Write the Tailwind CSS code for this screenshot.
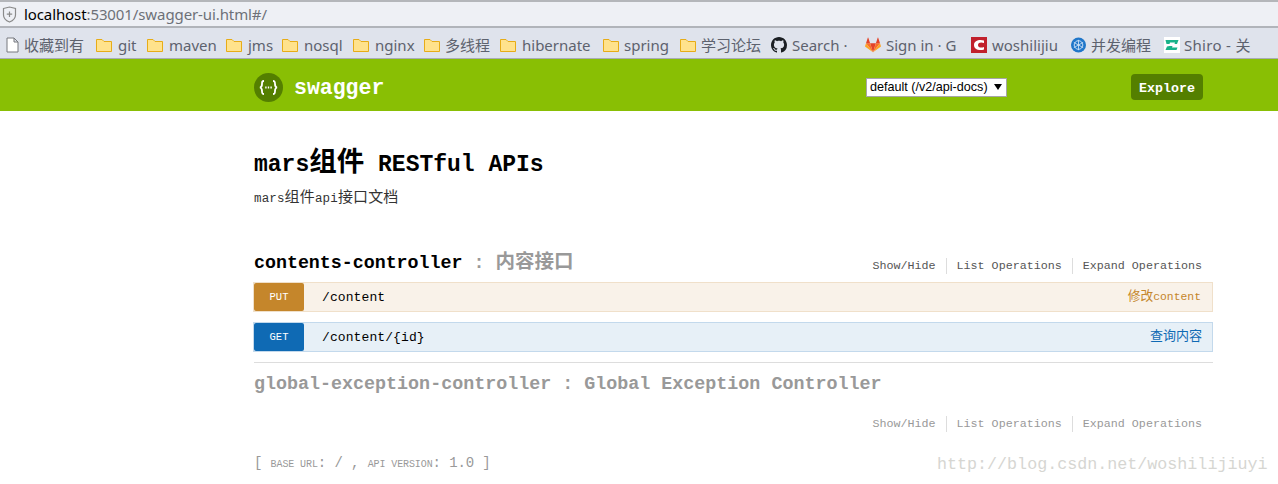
<!DOCTYPE html>
<html lang="en">
<head>
    <meta charset="UTF-8">
    <title>Swagger UI</title>
    <script src="https://cdn.jsdelivr.net/npm/@tailwindcss/browser@4"></script>
</head>
<body class="bg-white font-['Liberation_Mono','Noto_Sans_CJK_SC',monospace]">
<div class="relative h-[484px] overflow-hidden">

    <!-- browser chrome -->
    <div class="h-[59px] border-b border-[#a9adb5] font-['Noto_Sans','Noto_Sans_CJK_SC',sans-serif]">
        <div class="h-[28px] border-t-2 border-b-2 border-t-[#b4b6ba] border-b-[#b1b4ba] bg-[#eef0f5] flex items-center pl-[2px]">
            <svg class="w-[15px] h-[17px]" viewBox="0 0 15 17" fill="none" stroke="#8a8a8a" stroke-width="1.2">
                <path d="M1.5 2.5 L7.5 1 L13.5 2.5 V9 C13.5 12.5 10.5 14.8 7.5 16 C4.5 14.8 1.5 12.5 1.5 9 Z"/>
                <path d="M7.5 5.5 V11 M4.8 8.2 H10.2"/>
            </svg>
            <div class="ml-[7px] text-[15px] tracking-[-0.1px] text-[#6d7078]"><span class="text-black">localhost</span>:53001/swagger-ui.html#/</div>
        </div>
        <div class="h-[30px] bg-[#dfe3ec] flex items-center text-[15px] text-[#5d626e] pl-[6px] pt-[4px] whitespace-nowrap">
            <div class="w-[90px] flex items-center gap-[5px]">
                <svg class="w-[13px] h-[16px]" viewBox="0 0 13 16" fill="#fff" stroke="#77797f"><path d="M1 1 H8 L12 5 V15 H1 Z M8 1 V5 H12" /></svg>
                <span>收藏到有</span>
            </div>
            <div class="w-[51px] flex items-center gap-[6px]"><svg class="w-[16px] h-[14px]" viewBox="0 0 16 14" fill="#ffe28c" stroke="#e7ac17"><path d="M.5 13.5 V1.5 H6 L8 3.5 H15.5 V13.5 Z"/></svg><span>git</span></div>
            <div class="w-[79px] flex items-center gap-[6px]"><svg class="w-[16px] h-[14px]" viewBox="0 0 16 14" fill="#ffe28c" stroke="#e7ac17"><path d="M.5 13.5 V1.5 H6 L8 3.5 H15.5 V13.5 Z"/></svg><span>maven</span></div>
            <div class="w-[56px] flex items-center gap-[6px]"><svg class="w-[16px] h-[14px]" viewBox="0 0 16 14" fill="#ffe28c" stroke="#e7ac17"><path d="M.5 13.5 V1.5 H6 L8 3.5 H15.5 V13.5 Z"/></svg><span>jms</span></div>
            <div class="w-[71px] flex items-center gap-[6px]"><svg class="w-[16px] h-[14px]" viewBox="0 0 16 14" fill="#ffe28c" stroke="#e7ac17"><path d="M.5 13.5 V1.5 H6 L8 3.5 H15.5 V13.5 Z"/></svg><span>nosql</span></div>
            <div class="w-[71px] flex items-center gap-[6px]"><svg class="w-[16px] h-[14px]" viewBox="0 0 16 14" fill="#ffe28c" stroke="#e7ac17"><path d="M.5 13.5 V1.5 H6 L8 3.5 H15.5 V13.5 Z"/></svg><span>nginx</span></div>
            <div class="w-[76px] flex items-center gap-[5px]"><svg class="w-[16px] h-[14px]" viewBox="0 0 16 14" fill="#ffe28c" stroke="#e7ac17"><path d="M.5 13.5 V1.5 H6 L8 3.5 H15.5 V13.5 Z"/></svg><span>多线程</span></div>
            <div class="w-[103px] flex items-center gap-[6px]"><svg class="w-[16px] h-[14px]" viewBox="0 0 16 14" fill="#ffe28c" stroke="#e7ac17"><path d="M.5 13.5 V1.5 H6 L8 3.5 H15.5 V13.5 Z"/></svg><span>hibernate</span></div>
            <div class="w-[77px] flex items-center gap-[5px]"><svg class="w-[16px] h-[14px]" viewBox="0 0 16 14" fill="#ffe28c" stroke="#e7ac17"><path d="M.5 13.5 V1.5 H6 L8 3.5 H15.5 V13.5 Z"/></svg><span>spring</span></div>
            <div class="w-[91px] flex items-center gap-[5px]"><svg class="w-[16px] h-[14px]" viewBox="0 0 16 14" fill="#ffe28c" stroke="#e7ac17"><path d="M.5 13.5 V1.5 H6 L8 3.5 H15.5 V13.5 Z"/></svg><span>学习论坛</span></div>
            <div class="w-[94px] flex items-center gap-[5px]">
                <svg class="w-[16px] h-[16px]" viewBox="0 0 16 16" fill="#1b1f23"><path d="M8 0C3.58 0 0 3.58 0 8c0 3.54 2.29 6.53 5.47 7.59.4.07.55-.17.55-.38 0-.19-.01-.82-.01-1.49-2.01.37-2.53-.49-2.69-.94-.09-.23-.48-.94-.82-1.13-.28-.15-.68-.52-.01-.53.63-.01 1.08.58 1.23.82.72 1.21 1.87.87 2.33.66.07-.52.28-.87.51-1.07-1.78-.2-3.64-.89-3.64-3.95 0-.87.31-1.59.82-2.15-.08-.2-.36-1.02.08-2.12 0 0 .67-.21 2.2.82.64-.18 1.32-.27 2-.27s1.36.09 2 .27c1.53-1.04 2.2-.82 2.2-.82.44 1.1.16 1.92.08 2.12.51.56.82 1.27.82 2.15 0 3.07-1.87 3.75-3.65 3.95.29.25.54.73.54 1.48 0 1.07-.01 1.93-.01 2.2 0 .21.15.46.55.38A8.01 8.01 0 0016 8c0-4.42-3.58-8-8-8z"/></svg>
                <span>Search ·</span>
            </div>
            <div class="w-[106px] flex items-center gap-[5px]">
                <svg class="w-[16px] h-[16px]" viewBox="0 0 16 16">
                    <path fill="#e24329" d="M8 15.2 L5.1 6.2 H10.9 Z"/>
                    <path fill="#fc6d26" d="M8 15.2 L5.1 6.2 H1 Z M8 15.2 L10.9 6.2 H15 Z"/>
                    <path fill="#fca326" d="M1 6.2 L.1 9.1 C0 9.4.1 9.6.3 9.8 L8 15.2 Z M15 6.2 L15.9 9.1 C16 9.4 15.9 9.6 15.7 9.8 L8 15.2 Z"/>
                    <path fill="#e24329" d="M1 6.2 H5.1 L3.3 .7 C3.2 .4 2.9 .4 2.8 .7 Z M15 6.2 H10.9 L12.7 .7 C12.8 .4 13.1 .4 13.2 .7 Z"/>
                </svg>
                <span>Sign in · G</span>
            </div>
            <div class="w-[100px] flex items-center gap-[5px]">
                <svg class="w-[16px] h-[16px]" viewBox="0 0 16 16">
                    <rect width="16" height="16" fill="#c1202c"/>
                    <path d="M13 3.6 C9 2 3 3.2 3 8 C3 12.8 9 14 13 12.4 V10 C10.5 11 7 10.8 7 8 C7 5.2 10.5 5 13 6 Z" fill="#fff"/>
                </svg>
                <span>woshilijiu</span>
            </div>
            <div class="w-[93px] flex items-center gap-[5px]">
                <svg class="w-[15px] h-[16px]" viewBox="0 0 16 16" fill="none">
                    <circle cx="8" cy="8" r="8" fill="#1f76c9"/>
                    <circle cx="8" cy="8" r="4.6" stroke="#cfe3f7"/>
                    <path d="M8 2.5 V13.5 M3 5.2 L13 10.8 M13 5.2 L3 10.8" stroke="#cfe3f7" stroke-width=".9"/>
                </svg>
                <span>并发编程</span>
            </div>
            <div class="flex items-center gap-[4px]">
                <svg class="w-[16px] h-[16px]" viewBox="0 0 16 16">
                    <rect width="16" height="16" fill="#fff"/>
                    <path fill="#19b38a" d="M1.5 3 H14.5 L13 7 H10.5 L11 5.5 H6 L5.5 7 H2.5 Z M5.5 9 H8.5 L8 10.5 H13.5 L12.5 13 H1.5 L3 9.5 Z"/>
                </svg>
                <span class="tracking-[.3px]">Shiro - 关</span>
            </div>
        </div>
    </div>

    <!-- swagger header -->
    <div class="h-[52px] bg-[#89bf04] pl-[254px] pt-[4px] flex items-center">
        <div class="w-[29px] h-[29px] rounded-full bg-[#547f00] flex items-center justify-center text-white">
            <svg class="w-[19px] h-[15px]" viewBox="0 0 19 15" fill="none" stroke="#fff" stroke-width="1.8">
                <path d="M5 1 C3 1 3 2 3 4 C3 6 3 7 1 7.5 C3 8 3 9 3 11 C3 13 3 14 5 14"/>
                <path d="M14 1 C16 1 16 2 16 4 C16 6 16 7 18 7.5 C16 8 16 9 16 11 C16 13 16 14 14 14"/>
                <path d="M6.2 7.5 H7.6 M8.8 7.5 H10.2 M11.4 7.5 H12.8" stroke-width="1.8"/>
            </svg>
        </div>
        <div class="ml-[11px] mt-[2px] w-[572px] text-white text-[21.5px] font-bold">swagger</div>
        <div class="w-[141px] h-[19px] bg-white border border-[#a6a6a6] flex items-center pl-[3px] font-['Liberation_Sans',sans-serif] text-[12.6px] text-black">
            <span class="w-[124px]">default (/v2/api-docs)</span>
            <svg class="w-[8px] h-[6px]" viewBox="0 0 8 6" fill="#000"><path d="M0 0 H8 L4 6 Z"/></svg>
        </div>
        <div class="ml-[124px] w-[72px] h-[26px] pt-[3px] rounded-[4px] bg-[#547f00] text-white text-[13.3px] font-bold flex items-center justify-center">Explore</div>
    </div>

    <!-- api info -->
    <div class="pl-[254px] pr-[65px]">
        <h1 class="mt-[38px] h-[30px] leading-[30px] text-[23px] font-bold text-black whitespace-nowrap">mars<span class="text-[27.5px]">组件</span> RESTful APIs</h1>
        <p class="mt-[10px] h-[20px] leading-[20px] text-[12.5px] tracking-[.15px] text-[#333]">mars<span class="text-[15px]">组件</span>api<span class="text-[15px]">接口文档</span></p>

        <!-- contents-controller -->
        <div class="mt-[41px] h-[28px] flex items-center justify-between">
            <h2 class="text-[18.3px] font-bold text-black whitespace-nowrap">contents-controller <span class="text-[#999]">: <span class="text-[19.5px]">内容接口</span></span></h2>
            <ul class="flex items-center text-[11.7px] text-[#555] pr-[11px] pt-[3px]">
                <li class="pr-[10px] border-r border-[#ddd] leading-[16px]">Show/Hide</li>
                <li class="px-[10px] border-r border-[#ddd] leading-[16px]">List Operations</li>
                <li class="pl-[10px] leading-[16px]">Expand Operations</li>
            </ul>
        </div>

        <div class="-ml-[1px] mt-[4px] h-[30px] bg-[#f9f2e9] border border-[#f0e0ca] flex items-center">
            <div class="w-[50px] h-[28px] pt-[2px] rounded-[2px] bg-[#c5862b] text-white text-[10.5px] flex items-center justify-center">PUT</div>
            <div class="ml-[18px] pt-[1px] text-[13px] tracking-[.1px] text-black">/content</div>
            <div class="ml-auto mr-[11px] text-[#c5862b] text-[11.4px]"><span class="text-[12.7px]">修改</span>content</div>
        </div>
        <div class="-ml-[1px] mt-[10px] h-[30px] bg-[#e7f0f7] border border-[#c3d9ec] flex items-center">
            <div class="w-[50px] h-[28px] pt-[2px] rounded-[2px] bg-[#0f6ab4] text-white text-[10.5px] flex items-center justify-center">GET</div>
            <div class="ml-[18px] pt-[1px] text-[13px] tracking-[.1px] text-black">/content/{id}</div>
            <div class="ml-auto mr-[10px] text-[#0f6ab4] text-[13px]">查询内容</div>
        </div>

        <div class="mt-[10px] border-t border-[#ddd]"></div>

        <!-- global-exception-controller -->
        <h2 class="mt-[10px] h-[24px] leading-[24px] text-[18.35px] font-bold text-[#999] whitespace-nowrap">global-exception-controller : Global Exception Controller</h2>
        <div class="mt-[19px] flex justify-end">
            <ul class="flex items-center text-[11.7px] text-[#999] pr-[11px]">
                <li class="pr-[10px] border-r border-[#ddd] leading-[16px]">Show/Hide</li>
                <li class="px-[10px] border-r border-[#ddd] leading-[16px]">List Operations</li>
                <li class="pl-[10px] leading-[16px]">Expand Operations</li>
            </ul>
        </div>

        <div class="mt-[21px] h-[20px] leading-[20px] text-[14px] tracking-[-.1px] text-[#999]">[ <span class="uppercase text-[10px]">base url</span>: / , <span class="uppercase text-[10px]">api version</span>: 1.0 ]</div>
    </div>

    <!-- watermark -->
    <div class="absolute left-[937px] top-[454px] text-[16.7px] leading-[22px] text-[#d6d6d2] whitespace-nowrap">http://blog.csdn.net/woshilijiuyi</div>
</div>
</body>
</html>
